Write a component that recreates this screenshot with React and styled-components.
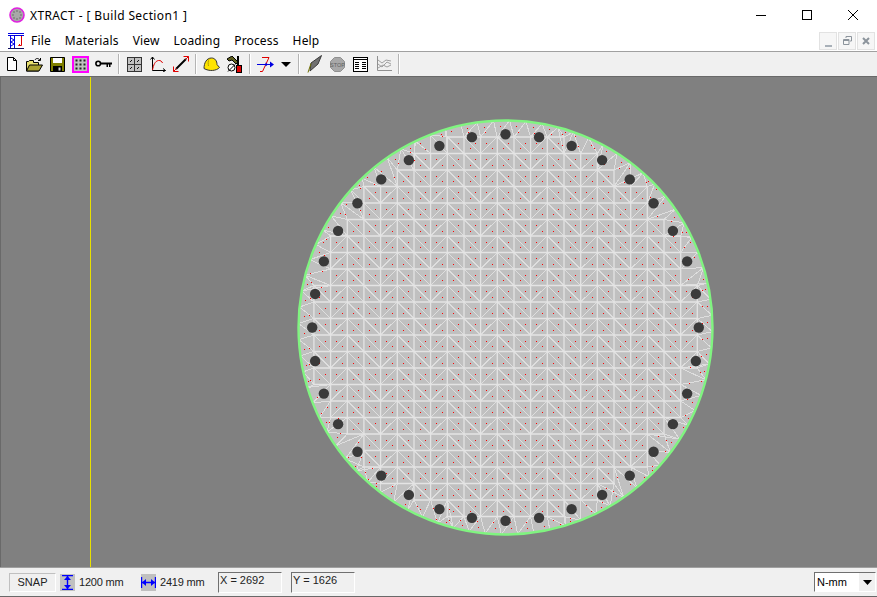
import React from "react";
import styled, { createGlobalStyle } from "styled-components";

const GlobalStyle = createGlobalStyle`
  html, body { margin: 0; padding: 0; height: 100%; overflow: hidden; }
  #root { height: 100%; }
  body { font-family: "Liberation Sans", Arial, sans-serif; font-size: 11px; color: #000; }
`;

const Window = styled.div`
  width: 877px;
  height: 597px;
  display: flex;
  flex-direction: column;
  background: #f0f0f0;
`;

const TitleBar = styled.div`
  height: 30px;
  flex: none;
  display: flex;
  align-items: center;
  background: #fff;
  padding-left: 9px;
`;

const TitleText = styled.span`
  margin-left: 5px;
  font-family: "Noto Sans", sans-serif;
  font-size: 12px;
  letter-spacing: 0.38px;
`;

const WinButtons = styled.div`
  margin-left: auto;
  margin-right: 1px;
  display: flex;
  height: 100%;
`;

const WinButton = styled.div`
  width: 46px;
  display: flex;
  align-items: center;
  justify-content: center;
`;

const MenuBar = styled.div`
  height: 22px;
  flex: none;
  box-sizing: border-box;
  display: flex;
  align-items: center;
  background: #fff;
  padding-left: 8px;
  border-bottom: 1px solid #a0a0a0;
`;

const MenuItems = styled.div`
  display: flex;
  gap: 14px;
  margin-left: 7px;
  font-family: "Noto Sans", sans-serif;
  font-size: 12px;
  letter-spacing: 0.16px;
`;

const MdiButtons = styled.div`
  margin-left: auto;
  margin-right: 2px;
  display: flex;
  gap: 1px;
`;

const MdiButton = styled.div`
  width: 18px;
  height: 18px;
  border: 1px solid #e2e2e2;
  box-sizing: border-box;
  background: #f6f6f6;
  display: flex;
  justify-content: center;
  align-items: ${(props) => (props.$low ? "flex-end" : "center")};
  padding-bottom: ${(props) => (props.$low ? 2 : 0)}px;
`;

const ToolBar = styled.div`
  height: 24px;
  flex: none;
  display: flex;
  align-items: center;
  background: #f0f0f0;
`;

const ToolIcon = styled.div`
  width: ${(props) => props.$w || 23}px;
  height: 22px;
  display: flex;
  align-items: center;
  justify-content: center;
`;

const ToolSep = styled.div`
  width: 2px;
  height: 20px;
  margin: 0 3px;
  background: #b4b4b4;
  border-right: 1px solid #fff;
  box-sizing: border-box;
`;

const Canvas = styled.div`
  flex: 1;
  min-height: 0;
  overflow: hidden;
  background: #808080;
  border-top: 1px solid #696969;
  border-left: 1px solid #696969;
  svg { display: block; }
`;

const StatusBar = styled.div`
  height: 30px;
  flex: none;
  display: flex;
  align-items: center;
  padding-left: 9px;
  border-top: 1px solid #a0a0a0;
  border-bottom: 1px solid #696969;
  background: #f0f0f0;
  box-sizing: border-box;
`;

const SnapBox = styled.div`
  width: 47px;
  height: 19px;
  box-sizing: border-box;
  border: 1px solid #fff;
  border-top-color: #c0c0c0;
  border-left-color: #c0c0c0;
  display: flex;
  align-items: center;
  justify-content: center;
  color: #222;
`;

const DimIcon = styled.div`
  width: 15px;
  height: 17px;
  background: #c0c0c0;
  display: flex;
  align-items: center;
  justify-content: center;
  margin-left: ${(props) => props.$ml}px;
`;

const DimText = styled.span`
  margin-left: 4px;
  width: ${(props) => props.$w}px;
  color: #222;
  letter-spacing: -0.2px;
`;

const CoordBox = styled.div`
  width: 64px;
  height: 21px;
  box-sizing: border-box;
  margin-right: 9px;
  border: 1px solid #fff;
  border-top-color: #707070;
  border-left-color: #707070;
  padding-left: 1px;
  line-height: 15px;
  color: #222;
`;

const UnitSelect = styled.div`
  margin-left: auto;
  margin-right: 1px;
  width: 62px;
  height: 20px;
  box-sizing: border-box;
  display: flex;
  background: #fff;
  border: 1px solid #fff;
  border-top-color: #707070;
  border-left-color: #707070;
  padding-left: 2px;
  line-height: 18px;
`;

const UnitArrow = styled.div`
  margin-left: auto;
  width: 16px;
  background: #f0f0f0;
  display: flex;
  align-items: center;
  justify-content: center;
`;

/* section geometry, in canvas coordinates */
const CX = 504.5;
const CY = 250.5;
const R = 207;
const PITCH_X = 16.67;
const PITCH_Y = 16.5;
const ORIGIN_X = 496.3;
const ORIGIN_Y = 258;
const NODE_R = 200;
const RIM_POINTS = 80;

const px = (v) => Math.round(v * 10) / 10;

const buildMesh = () => {
  let grid = "";
  let diag = "";
  const dots = [];
  const kept = new Set();
  const nodes = new Map();
  const inside = (x, y) => (x - CX) ** 2 + (y - CY) ** 2 <= NODE_R * NODE_R;

  for (let k = -14; k <= 14; k++) {
    for (let row = -15; row <= 14; row++) {
      const x0 = ORIGIN_X + k * PITCH_X;
      const y0 = ORIGIN_Y + row * PITCH_Y;
      const x1 = x0 + PITCH_X;
      const y1 = y0 + PITCH_Y;
      if (![[x0, y0], [x1, y0], [x0, y1], [x1, y1]].every(([x, y]) => inside(x, y))) continue;
      kept.add(`${k},${row}`);
      grid += `M${px(x0)} ${px(y0)}H${px(x1)}V${px(y1)}H${px(x0)}Z`;
      const slash = ((k % 3) + 3) % 3 === 2;
      if (slash) {
        diag += `M${px(x0)} ${px(y1)}L${px(x1)} ${px(y0)}`;
        dots.push([x0 + PITCH_X / 3, y0 + PITCH_Y / 3], [x0 + (2 * PITCH_X) / 3, y0 + (2 * PITCH_Y) / 3]);
      } else {
        diag += `M${px(x0)} ${px(y0)}L${px(x1)} ${px(y1)}`;
        dots.push([x0 + (2 * PITCH_X) / 3, y0 + PITCH_Y / 3], [x0 + PITCH_X / 3, y0 + (2 * PITCH_Y) / 3]);
      }
    }
  }

  // nodes on the edge of the square mesh, these get joined to the circle
  kept.forEach((key) => {
    const [k, row] = key.split(",").map(Number);
    [[k, row], [k + 1, row], [k, row + 1], [k + 1, row + 1]].forEach(([nk, nr]) => {
      const full =
        kept.has(`${nk},${nr}`) &&
        kept.has(`${nk - 1},${nr}`) &&
        kept.has(`${nk},${nr - 1}`) &&
        kept.has(`${nk - 1},${nr - 1}`);
      if (!full) nodes.set(`${nk},${nr}`, [ORIGIN_X + nk * PITCH_X, ORIGIN_Y + nr * PITCH_Y]);
    });
  });
  const edge = [...nodes.values()];

  const rim = Array.from({ length: RIM_POINTS }, (_, i) => {
    const a = (i / RIM_POINTS) * Math.PI * 2 + 0.02;
    return [CX + Math.cos(a) * R, CY + Math.sin(a) * R];
  });
  const nearest = ([x, y], list, count) =>
    [...list].sort((p, q) => (p[0] - x) ** 2 + (p[1] - y) ** 2 - ((q[0] - x) ** 2 + (q[1] - y) ** 2)).slice(0, count);

  rim.forEach((p, i) => {
    const next = rim[(i + 1) % RIM_POINTS];
    const [n] = nearest(p, edge, 1);
    diag += `M${px(p[0])} ${px(p[1])}L${px(n[0])} ${px(n[1])}`;
    dots.push([(p[0] + next[0] + n[0]) / 3, (p[1] + next[1] + n[1]) / 3]);
  });
  edge.forEach((n) => {
    const [a, b] = nearest(n, rim, 2);
    diag += `M${px(n[0])} ${px(n[1])}L${px(a[0])} ${px(a[1])}`;
    diag += `M${px(n[0])} ${px(n[1])}L${px(b[0])} ${px(b[1])}`;
    dots.push([(n[0] * 2 + b[0]) / 3, (n[1] * 2 + b[1]) / 3]);
  });

  const dotPath = dots.map(([x, y]) => `M${Math.round(x)} ${Math.round(y)}h1v1h-1z`).join("");
  return { grid, diag, dotPath };
};

const bars = Array.from({ length: 36 }, (_, i) => {
  const a = (i * Math.PI) / 18;
  return [CX + Math.sin(a) * 193.3, CY - Math.cos(a) * 193.3];
});

const mesh = buildMesh();

const Section = () => (
  <svg width="876" height="490" viewBox="0 0 876 490">
    <line x1="89.5" y1="0" x2="89.5" y2="490" stroke="#e8e000" strokeWidth="1" />
    <circle cx={CX} cy={CY} r={R} fill="#c0c0c0" />
    <path d={mesh.diag} fill="none" stroke="#dedede" strokeWidth="1" shapeRendering="crispEdges" />
    <path d={mesh.grid} fill="none" stroke="#e4e4e4" strokeWidth="1.3" />
    <path d={mesh.dotPath} fill="#ff0000" shapeRendering="crispEdges" />
    <circle cx={CX} cy={CY} r={R} fill="none" stroke="#80f480" strokeWidth="2.4" />
    {bars.map(([x, y], i) => (
      <circle key={i} cx={x} cy={y} r="5.2" fill="#3a3a3a" />
    ))}
  </svg>
);

const AppLogo = () => (
  <svg width="16" height="16" viewBox="0 0 16 16">
    <circle cx="8" cy="8" r="7" fill="#a8a8a8" stroke="#e020e0" strokeWidth="1.6" />
    {[[8, 4], [11, 5], [12, 8], [11, 11], [8, 12], [5, 11], [4, 8], [5, 5]].map(([x, y]) => (
      <rect key={`${x}-${y}`} x={x - 0.5} y={y - 0.5} width="1" height="1" fill="#333" />
    ))}
  </svg>
);

const MenuLogo = () => (
  <svg width="16" height="16" viewBox="0 0 16 16">
    <path d="M0 .5h16M0 2.500h16" stroke="#0000e0" fill="none" />
    <path d="M2.500 2v13M6.500 2v13M3 5l3 2-3 2 3 2-3 2" stroke="#0000e0" fill="none" />
    <path d="M0 15.500h16" stroke="#101060" fill="none" />
    <path d="M13.500 3v9.500h-3M10.500 12.500l1.500-1.500" stroke="#e00000" fill="none" />
  </svg>
);

const NewIcon = () => (
  <svg width="16" height="16" viewBox="0 0 16 16">
    <path d="M3.500 1.500h6l3 3v10h-9zM9.500 1.500v3h3" fill="#fff" stroke="#000" />
  </svg>
);
const OpenIcon = () => (
  <svg width="17" height="15" viewBox="0 0 17 15">
    <path d="M.5 14V4.500h2l1-1h4v2h5V14z" fill="#e8e070" stroke="#000" />
    <path d="M.5 14l3-6h13l-3.500 6z" fill="#a8a030" stroke="#000" />
    <path d="M9 3c1-2 3-2 5 0M14.500 1v2.500H12" fill="none" stroke="#000" />
  </svg>
);
const SaveIcon = () => (
  <svg width="15" height="15" viewBox="0 0 15 15">
    <path d="M.5.5h14v14H.5z" fill="#808000" stroke="#000" />
    <path d="M3 1h9v5H3z" fill="#fff" />
    <path d="M3 9h9v6H3z" fill="#000" />
    <path d="M8.500 10.500h2v3h-2z" fill="#d0d0d0" />
  </svg>
);
const GridIcon = () => (
  <svg width="17" height="17" viewBox="0 0 17 17">
    <rect x="1" y="1" width="15" height="15" fill="#c0c0c0" stroke="#ff00ff" strokeWidth="2" />
    {[4, 8, 12].flatMap((x) =>
      [4, 8, 12].map((y) => <rect key={`${x}${y}`} x={x - 0.5} y={y - 0.5} width="2" height="2" fill="#222" />)
    )}
  </svg>
);
const KeyIcon = () => (
  <svg width="17" height="9" viewBox="0 0 17 9">
    <circle cx="3.200" cy="3.500" r="2.300" fill="none" stroke="#000" strokeWidth="1.600" />
    <path d="M6 2.500h11v2h-1.500V7H14V4.500h-1V7h-1.500V4.500H6z" fill="#000" />
  </svg>
);
const MeshIcon = () => (
  <svg width="15" height="15" viewBox="0 0 15 15">
    <rect x=".5" y=".5" width="14" height="14" fill="#c0c0c0" stroke="#333" />
    <path d="M7.500 0v15M0 7.500h15" stroke="#333" fill="none" />
    <path d="M3 5l2-2M10 5l2-2M3 12l2-2M10 12l2-2" stroke="#111" fill="none" />
  </svg>
);
const CurveIcon = () => (
  <svg width="16" height="16" viewBox="0 0 16 16">
    <path d="M2.500 1v13.500h13M.5 3.500l2-2.500 2 2.500M13 12.500l2.500 2-2.500 1.500" fill="none" stroke="#000" />
    <path d="M2.500 14c1-5 2.500-9 6-9.500 2-.3 3.500 1 4 2.500" fill="none" stroke="#e00000" />
  </svg>
);
const MeasureIcon = () => (
  <svg width="16" height="16" viewBox="0 0 16 16">
    <path d="M3 13L13 3" stroke="#000" strokeWidth="2" />
    <path d="M10.500.5h5v5M.5 10.500v5h5" stroke="#e00000" fill="none" />
    <path d="M12.500 3.500l3-3M3.500 12.500l-3 3" stroke="#e00000" fill="none" />
  </svg>
);
const HelmetIcon = () => (
  <svg width="17" height="15" viewBox="0 0 17 15">
    <path d="M1 11.500C1 6 3.500 1 8.500 1c3.500 0 5.500 3 5.500 6.500l2.500 3c-3 3.500-10.500 4-15.500 1z" fill="#ffe400" stroke="#333" />
    <path d="M6 2c-1 2-1 5-.5 7" stroke="#b0a000" fill="none" />
  </svg>
);
const ToolsIcon = () => (
  <svg width="17" height="17" viewBox="0 0 17 17">
    <path d="M1 3l5-3 6 6-2 2-4-4-3 1z" fill="#606020" stroke="#000" />
    <path d="M12 0v9" stroke="#000" strokeWidth="2" />
    <rect x="10.500" y="9.500" width="5" height="7" fill="#e00000" stroke="#000" />
    <circle cx="5.500" cy="11.500" r="3.500" fill="#fff" stroke="#000" />
    <path d="M2 15.500l7-7" stroke="#000" />
  </svg>
);
const AxisIcon = () => (
  <svg width="17" height="17" viewBox="0 0 17 17">
    <path d="M5 1.500h7L5.500 15.500H3" fill="none" stroke="#e00000" />
    <path d="M0 8.500h14" stroke="#0000e0" fill="none" />
    <path d="M17 8.500l-4-3v6zM11 8.500l-2.500-2v4z" fill="#0000e0" />
  </svg>
);
const CaretIcon = () => (
  <svg width="10" height="5" viewBox="0 0 10 5">
    <path d="M0 0h10L5 5z" fill="#000" />
  </svg>
);
const PenIcon = () => (
  <svg width="15" height="18" viewBox="0 0 15 18">
    <path d="M4 8L14.500.5 11 9l-8 7z" fill="#707070" stroke="#3a3a3a" />
    <path d="M1 17.500l3-9" stroke="#707000" fill="none" />
  </svg>
);
const StopIcon = () => (
  <svg width="15" height="15" viewBox="0 0 15 15">
    <path d="M4.500.5h6l4 4v6l-4 4h-6l-4-4v-6z" fill="#a8a8a8" stroke="#909090" />
    <text x="7.500" y="9.500" textAnchor="middle" fontSize="5.500" fontFamily="Liberation Sans" fill="#606060">STOP</text>
  </svg>
);
const ReportIcon = () => (
  <svg width="15" height="15" viewBox="0 0 15 15">
    <rect x=".5" y=".5" width="14" height="14" fill="#fff" stroke="#000" />
    <path d="M.5 2.500h14M2 5.500h4M2 7.500h4M2 9.500h4M2 11.500h4M9 5.500h4M9 7.500h4M9 9.500h4M9 11.500h4" stroke="#000" fill="none" />
  </svg>
);
const ChartIcon = () => (
  <svg width="16" height="16" viewBox="0 0 16 16">
    <path d="M1.500 0v14.500H16" fill="none" stroke="#909090" />
    <path d="M2 4l4 3 4-3 5 1M2 8l4 3 5-5 4 2M2 12l5-3 4 2 4-2" fill="none" stroke="#a0a0a0" />
  </svg>
);

const HeightIcon = () => (
  <svg width="11" height="15" viewBox="0 0 11 15">
    <path d="M0 .5h11M0 14.500h11M5.500 1v13" stroke="#0000ff" strokeWidth="1.400" fill="none" />
    <path d="M5.500 1L2 5h7zM5.500 14L2 10h7z" fill="#0000ff" />
  </svg>
);
const WidthIcon = () => (
  <svg width="15" height="11" viewBox="0 0 15 11">
    <path d="M.5 0v11M14.500 0v11M1 5.500h13" stroke="#0000ff" strokeWidth="1.400" fill="none" />
    <path d="M1 5.500L5 2v7zM14 5.500L10 2v7z" fill="#0000ff" />
  </svg>
);

const menus = ["File", "Materials", "View", "Loading", "Process", "Help"];

const App = () => {
  return (
    <Window>
      <GlobalStyle />
      <TitleBar>
        <AppLogo />
        <TitleText>XTRACT - [ Build Section1 ]</TitleText>
        <WinButtons>
          <WinButton>
            <svg width="10" height="1" viewBox="0 0 10 1"><path d="M0 .5h10" stroke="#000" /></svg>
          </WinButton>
          <WinButton>
            <svg width="10" height="10" viewBox="0 0 10 10"><rect x=".5" y=".5" width="9" height="9" fill="none" stroke="#000" /></svg>
          </WinButton>
          <WinButton>
            <svg width="10" height="10" viewBox="0 0 10 10"><path d="M0 0l10 10M10 0L0 10" stroke="#000" /></svg>
          </WinButton>
        </WinButtons>
      </TitleBar>
      <MenuBar>
        <MenuLogo />
        <MenuItems>
          {menus.map((item) => (
            <span key={item}>{item}</span>
          ))}
        </MenuItems>
        <MdiButtons>
          <MdiButton $low>
            <svg width="7" height="2" viewBox="0 0 7 2"><path d="M0 1h7" stroke="#a8b0b8" strokeWidth="2" /></svg>
          </MdiButton>
          <MdiButton>
            <svg width="9" height="9" viewBox="0 0 9 9"><path d="M3 2V.5h5.500V5H7M.5 3.500h5.500v5H.5zM.5 4.500h5.500" fill="none" stroke="#8c949c" /></svg>
          </MdiButton>
          <MdiButton>
            <svg width="8" height="8" viewBox="0 0 8 8"><path d="M1 1l6 6M7 1L1 7" stroke="#8c949c" strokeWidth="2" /></svg>
          </MdiButton>
        </MdiButtons>
      </MenuBar>
      <ToolBar>
        <ToolIcon><NewIcon /></ToolIcon>
        <ToolIcon><OpenIcon /></ToolIcon>
        <ToolIcon><SaveIcon /></ToolIcon>
        <ToolIcon><GridIcon /></ToolIcon>
        <ToolIcon><KeyIcon /></ToolIcon>
        <ToolSep />
        <ToolIcon><MeshIcon /></ToolIcon>
        <ToolIcon><CurveIcon /></ToolIcon>
        <ToolIcon><MeasureIcon /></ToolIcon>
        <ToolSep />
        <ToolIcon><HelmetIcon /></ToolIcon>
        <ToolIcon><ToolsIcon /></ToolIcon>
        <ToolSep />
        <ToolIcon><AxisIcon /></ToolIcon>
        <ToolIcon $w={18}><CaretIcon /></ToolIcon>
        <ToolSep />
        <ToolIcon><PenIcon /></ToolIcon>
        <ToolIcon><StopIcon /></ToolIcon>
        <ToolIcon><ReportIcon /></ToolIcon>
        <ToolIcon><ChartIcon /></ToolIcon>
        <ToolSep />
      </ToolBar>
      <Canvas>
        <Section />
      </Canvas>
      <StatusBar>
        <SnapBox>SNAP</SnapBox>
        <DimIcon $ml={4}><HeightIcon /></DimIcon>
        <DimText $w={62}>1200 mm</DimText>
        <DimIcon $ml={0}><WidthIcon /></DimIcon>
        <DimText $w={58}>2419 mm</DimText>
        <CoordBox>X = 2692</CoordBox>
        <CoordBox>Y = 1626</CoordBox>
        <UnitSelect>
          N-mm
          <UnitArrow><svg width="9" height="5" viewBox="0 0 9 5"><path d="M0 0h9L4.500 5z" fill="#000" /></svg></UnitArrow>
        </UnitSelect>
      </StatusBar>
    </Window>
  );
};

export default App;
